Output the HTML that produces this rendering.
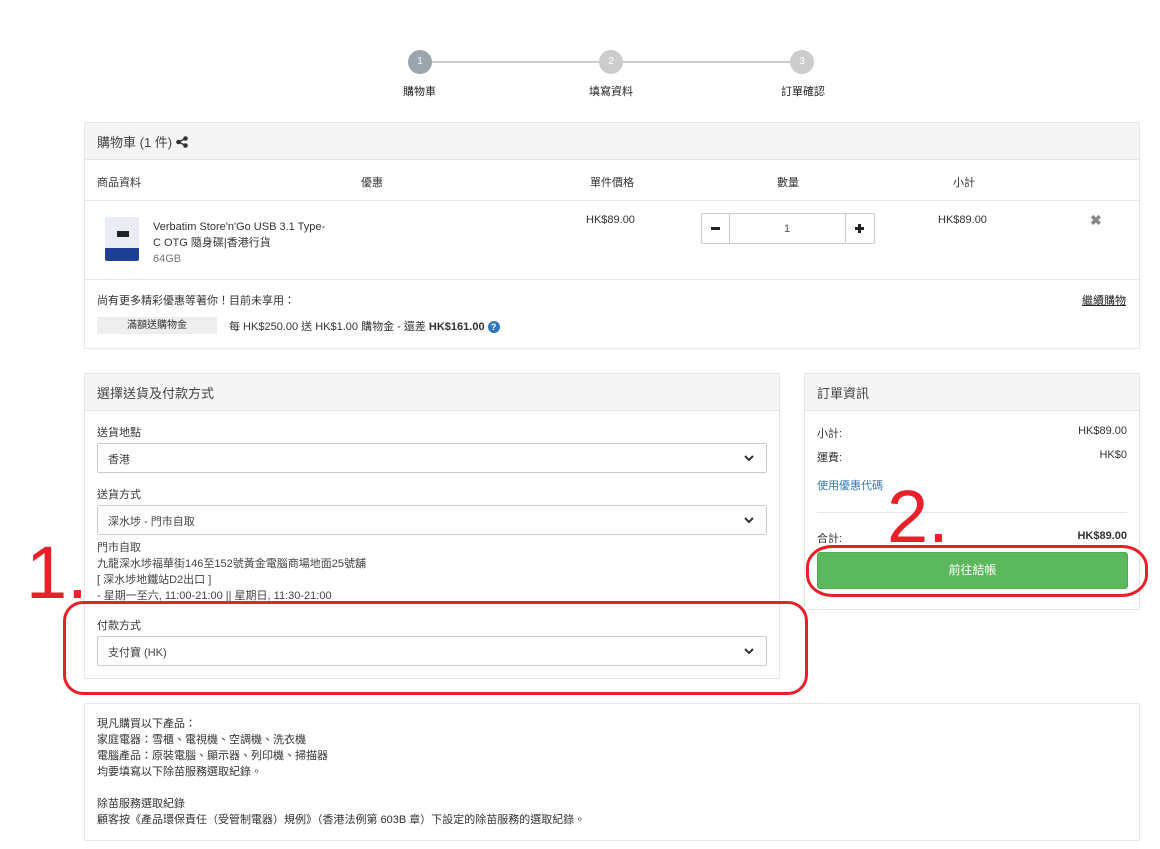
<!DOCTYPE html>
<html><head><meta charset="utf-8"><style>
*{margin:0;padding:0;box-sizing:border-box}
body{width:1160px;height:849px;background:#fff;font-family:"Liberation Sans","Noto Sans CJK TC",sans-serif;font-size:11px;color:#333;position:relative;overflow:hidden}
.a{position:absolute}
.panel{position:absolute;border:1px solid #e6e6e6;background:#fff}
.hd{position:absolute;left:0;right:0;top:0;height:37px;background:#f5f5f5;border-bottom:1px solid #e6e6e6;font-size:13px;padding:9px 12px;color:#444}
.sel{position:absolute;left:97px;width:670px;height:30px;border:1px solid #ccc;border-radius:2px;padding:7px 10px;font-size:11px;color:#444}
.sel svg{position:absolute;right:12px;top:10px}
.circ{position:absolute;width:24px;height:24px;border-radius:50%;color:#fff;font-size:10px;text-align:center;line-height:24px;top:50px}
.red{color:#e8202a;font-family:"Liberation Sans",sans-serif;position:absolute;font-size:74px;line-height:1}
</style></head><body>
<div class="a" style="left:420px;top:61px;width:382px;height:2px;background:#ccc"></div>
<div class="circ" style="left:408px;background:#9aa5ad">1</div>
<div class="circ" style="left:599px;background:#ccc">2</div>
<div class="circ" style="left:790px;background:#ccc">3</div>
<div class="a" style="left:403px;top:83px;color:#222">購物車</div>
<div class="a" style="left:589px;top:83px;color:#222">填寫資料</div>
<div class="a" style="left:781px;top:83px;color:#222">訂單確認</div>

<div class="panel" style="left:84px;top:122px;width:1056px;height:227px">
 <div class="hd">購物車 (1 件) <svg width="12" height="12" viewBox="0 0 12 12" style="vertical-align:-1px"><circle cx="9.5" cy="2.5" r="2.3" fill="#333"/><circle cx="2.5" cy="6" r="2.3" fill="#333"/><circle cx="9.5" cy="9.5" r="2.3" fill="#333"/><path d="M9.5 2.5L2.5 6L9.5 9.5" stroke="#333" stroke-width="1.5" fill="none"/></svg></div>
 <div class="a" style="left:0;right:0;top:77px;border-top:1px solid #e6e6e6"></div>
 <div class="a" style="left:0;right:0;top:156px;border-top:1px solid #e6e6e6"></div>
 <div class="a" style="left:12px;top:51px">商品資料</div>
 <div class="a" style="left:276px;top:51px">優惠</div>
 <div class="a" style="left:505px;top:51px">單件價格</div>
 <div class="a" style="left:692px;top:51px">數量</div>
 <div class="a" style="left:868px;top:51px">小計</div>
 <div class="a" style="left:20px;top:94px;width:34px;height:44px;background:linear-gradient(#e9edf3 0 70%,#1f3f94 70%);border-radius:2px"></div>
 <div class="a" style="left:32px;top:108px;width:12px;height:6px;background:#222"></div>
 <div class="a" style="left:68px;top:96px;line-height:16px;font-size:11px">Verbatim Store'n'Go USB 3.1 Type-<br>C OTG 隨身碟|香港行貨<br><span style="color:#777">64GB</span></div>
 <div class="a" style="left:501px;top:91px">HK$89.00</div>
 <div class="a" style="left:616px;top:90px;width:174px;height:31px;border:1px solid #ccc;border-radius:2px"></div>
 <div class="a" style="left:644px;top:90px;width:1px;height:31px;background:#ccc"></div>
 <div class="a" style="left:760px;top:90px;width:1px;height:31px;background:#ccc"></div>
 <div class="a" style="left:626px;top:104px;width:9px;height:2.5px;background:#222"></div>
 <div class="a" style="left:770px;top:104px;width:9px;height:2.5px;background:#222"></div>
 <div class="a" style="left:773.3px;top:100.5px;width:2.5px;height:9px;background:#222"></div>
 <div class="a" style="left:699px;top:100px;color:#555">1</div>
 <div class="a" style="left:853px;top:91px">HK$89.00</div>
 <div class="a" style="left:1005px;top:89px;color:#888;font-size:14px;font-weight:bold">✖</div>
 <div class="a" style="left:12px;top:169px">尚有更多精彩優惠等著你！目前未享用：</div>
 <div class="a" style="left:997px;top:169px;text-decoration:underline;color:#222">繼續購物</div>
 <div class="a" style="left:12px;top:194px;width:120px;height:17px;background:#eee;text-align:center;line-height:17px;font-size:10px">滿額送購物金</div>
 <div class="a" style="left:144px;top:195px">每 HK$250.00 送 HK$1.00 購物金 - 還差 <b>HK$161.00</b> <span style="display:inline-block;width:12px;height:12px;border-radius:50%;background:#2e78c0;color:#fff;font-size:9px;text-align:center;line-height:12px;font-weight:bold">?</span></div>
</div>

<div class="panel" style="left:84px;top:373px;width:696px;height:306px">
 <div class="hd">選擇送貨及付款方式</div>
</div>
<div class="a" style="left:97px;top:424px">送貨地點</div>
<div class="sel" style="top:443px">香港<svg width="10" height="8" viewBox="0 0 10 8"><path d="M1 2l4 4 4-4" stroke="#333" stroke-width="2" fill="none"/></svg></div>
<div class="a" style="left:97px;top:486px">送貨方式</div>
<div class="sel" style="top:505px">深水埗 - 門市自取<svg width="10" height="8" viewBox="0 0 10 8"><path d="M1 2l4 4 4-4" stroke="#333" stroke-width="2" fill="none"/></svg></div>
<div class="a" style="left:97px;top:540px;line-height:16px;color:#444">門市自取<br>九龍深水埗福華街146至152號黃金電腦商場地面25號舖<br>[ 深水埗地鐵站D2出口 ]<br>- 星期一至六, 11:00-21:00 || 星期日, 11:30-21:00</div>
<div class="a" style="left:97px;top:617px">付款方式</div>
<div class="sel" style="top:636px">支付寶 (HK)<svg width="10" height="8" viewBox="0 0 10 8"><path d="M1 2l4 4 4-4" stroke="#333" stroke-width="2" fill="none"/></svg></div>

<div class="panel" style="left:804px;top:373px;width:336px;height:237px">
 <div class="hd">訂單資訊</div>
 <div class="a" style="left:12px;top:51px">小計:</div><div class="a" style="right:12px;top:51px">HK$89.00</div>
 <div class="a" style="left:12px;top:75px">運費:</div><div class="a" style="right:12px;top:75px">HK$0</div>
 <div class="a" style="left:12px;top:103px;color:#337ab7">使用優惠代碼</div>
 <div class="a" style="left:12px;right:12px;top:138px;border-top:1px solid #e6e6e6"></div>
 <div class="a" style="left:12px;top:156px">合計:</div><div class="a" style="right:12px;top:156px;font-weight:bold">HK$89.00</div>
 <div class="a" style="left:12px;top:178px;width:311px;height:37px;background:#5cb85c;border:1px solid #4cae4c;border-radius:3px;color:#fff;font-size:12px;text-align:center;line-height:35px">前往結帳</div>
</div>

<div class="panel" style="left:84px;top:703px;width:1056px;height:138px">
 <div class="a" style="left:12px;top:12px;line-height:16px;font-size:11px">現凡購買以下產品：<br>家庭電器：雪櫃、電視機、空調機、洗衣機<br>電腦產品：原裝電腦、顯示器、列印機、掃描器<br>均要填寫以下除苗服務選取紀錄。<br><br>除苗服務選取紀錄<br>顧客按《產品環保責任（受管制電器）規例》（香港法例第 603B 章）下設定的除苗服務的選取紀錄。</div>
</div>

<div class="a" style="left:63px;top:601px;width:745px;height:94px;border:3px solid #e8202a;border-radius:20px"></div>
<div class="a" style="left:806px;top:545px;width:342px;height:52px;border:3px solid #e8202a;border-radius:26px/22px"></div>
<div class="red" style="left:26px;top:536px">1.</div>
<div class="red" style="left:887px;top:480px">2.</div>
</body></html>
